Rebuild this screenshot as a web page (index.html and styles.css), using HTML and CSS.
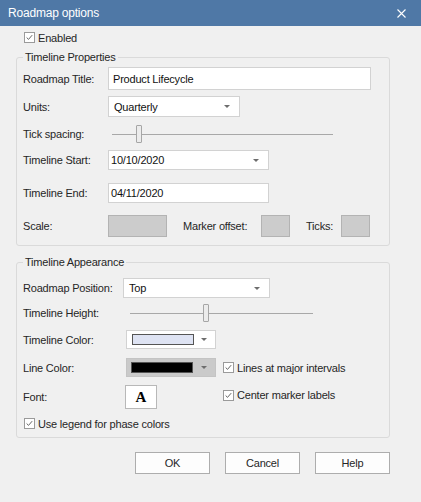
FILE: index.html
```html
<!DOCTYPE html>
<html lang="en">
<head>
    <meta charset="UTF-8">
    <meta name="viewport" content="width=device-width, initial-scale=1.0">
    <title>Roadmap options</title>
    <link rel="stylesheet" href="styles.css">
</head>
<body>
    <div class="titlebar">
        <span class="title">Roadmap options</span>
        <svg class="close" width="9" height="9" viewBox="0 0 9 9">
            <path d="M0.5 0.5 L8.5 8.5 M8.5 0.5 L0.5 8.5" stroke="#fff" stroke-width="1.1" fill="none"/>
        </svg>
    </div>

    <div class="dialog">
        <label class="check enabled">
            <span class="box"><svg viewBox="0 0 11 11"><path d="M2 5.5 L4.3 7.8 L8.8 2.6"/></svg></span>
            Enabled
        </label>

        <fieldset class="group props">
            <legend>Timeline Properties</legend>

            <span class="label">Roadmap Title:</span>
            <div class="input title-input">Product Lifecycle</div>

            <span class="label">Units:</span>
            <div class="select units">Quarterly <i class="arrow"></i></div>

            <span class="label">Tick spacing:</span>
            <div class="slider tick"><span class="thumb"></span></div>

            <span class="label">Timeline Start:</span>
            <div class="select date">10/10/2020 <i class="arrow"></i></div>

            <span class="label">Timeline End:</span>
            <div class="input date">04/11/2020</div>

            <span class="label">Scale:</span>
            <div class="scale-row">
                <span class="disabled-box scale"></span>
                <span class="inline-label marker">Marker offset:</span>
                <span class="disabled-box small"></span>
                <span class="inline-label ticks">Ticks:</span>
                <span class="disabled-box small"></span>
            </div>
        </fieldset>

        <fieldset class="group appear">
            <legend>Timeline Appearance</legend>

            <span class="label">Roadmap Position:</span>
            <div class="select position">Top <i class="arrow"></i></div>

            <span class="label">Timeline Height:</span>
            <div class="slider height"><span class="thumb"></span></div>

            <span class="label">Timeline Color:</span>
            <div class="color-combo"><span class="swatch lavender"></span><i class="arrow"></i></div>
            <span></span>

            <span class="label">Line Color:</span>
            <div class="color-combo grey"><span class="swatch black"></span><i class="arrow"></i></div>
            <label class="check">
                <span class="box"><svg viewBox="0 0 11 11"><path d="M2 5.5 L4.3 7.8 L8.8 2.6"/></svg></span>
                Lines at major intervals
            </label>

            <span class="label">Font:</span>
            <div class="font-btn">A</div>
            <label class="check center-labels">
                <span class="box"><svg viewBox="0 0 11 11"><path d="M2 5.5 L4.3 7.8 L8.8 2.6"/></svg></span>
                Center marker labels
            </label>

            <label class="check legend-check">
                <span class="box"><svg viewBox="0 0 11 11"><path d="M2 5.5 L4.3 7.8 L8.8 2.6"/></svg></span>
                Use legend for phase colors
            </label>
        </fieldset>

        <div class="buttons">
            <button>OK</button>
            <button>Cancel</button>
            <button>Help</button>
        </div>
    </div>
</body>
</html>
```

FILE: styles.css
```css
body {
    margin: 0;
    width: 421px;
    height: 502px;
    background-color: #f0f0f0;
    font-family: "Liberation Sans", Arial, sans-serif;
    font-size: 11px;
    letter-spacing: -0.2px;
    color: #262626;
    overflow: hidden;
}
.titlebar {
    height: 26px;
    background-color: #4f78a6;
    color: #fff;
    display: flex;
    align-items: center;
    justify-content: space-between;
    padding: 0 15px 0 8px;
    font-size: 12px;
}
.close {
    display: block;
}
.dialog {
    margin-left: 16px;
    width: 374px;
}
.check {
    display: flex;
    align-items: center;
    gap: 3px;
    white-space: nowrap;
}
.box {
    width: 11px;
    height: 11px;
    box-sizing: border-box;
    border: 1px solid #9a9a9a;
    background-color: #fff;
    display: inline-block;
}
.box svg {
    display: block;
    width: 9px;
    height: 9px;
    fill: none;
    stroke: #555;
    stroke-width: 1.1;
}
.enabled {
    height: 23px;
    margin-left: 8px;
}
.group {
    margin: 1px 0 0 0;
    padding: 0 6px 6px 6px;
    border: 1px solid #dadada;
    border-radius: 3px;
    min-width: 0;
    display: grid;
    align-items: center;
}
.group legend {
    padding: 0 2px;
    line-height: 14px;
}
.props {
    grid-template-columns: 85px 1fr;
    grid-template-rows: 29px 27px 28px 24px 41px 26px;
}
.appear {
    margin-top: 9px;
    padding-top: 7px;
    padding-bottom: 2px;
    grid-template-columns: 100px 100px 1fr;
    grid-template-rows: 24px 26px 27px 29px 30px 23px;
}
.input, .select {
    box-sizing: border-box;
    background-color: #fff;
    border: 1px solid #d2d2d2;
    display: flex;
    align-items: center;
    padding-left: 4px;
    color: #111;
}
.title-input {
    width: 263px;
    height: 23px;
}
.select {
    justify-content: space-between;
    padding-right: 9px;
}
.arrow {
    width: 0;
    height: 0;
    border-left: 3px solid transparent;
    border-right: 3px solid transparent;
    border-top: 3px solid #6d6d6d;
}
.units {
    width: 132px;
    height: 21px;
    padding-left: 5px;
}
.date {
    width: 161px;
    height: 20px;
    padding-left: 2px;
}
.position {
    grid-column: 2 / 4;
    width: 147px;
    height: 20px;
    padding-left: 5px;
}
.slider {
    position: relative;
    height: 1px;
    background-color: #a8a8a8;
}
.thumb {
    position: absolute;
    top: -9px;
    width: 6px;
    height: 18px;
    box-sizing: border-box;
    border: 1px solid #a6a6a6;
    border-radius: 1px;
    background-color: #ececec;
}
.tick {
    margin-left: 4px;
    width: 221px;
}
.tick .thumb {
    left: 24px;
}
.height {
    grid-column: 2 / 4;
    margin-left: 7px;
    width: 183px;
}
.height .thumb {
    left: 73px;
}
.scale-row {
    display: flex;
    align-items: center;
}
.disabled-box {
    height: 22px;
    box-sizing: border-box;
    background-color: #cccccc;
    border: 1px solid #b3b3b3;
}
.disabled-box.scale {
    width: 59px;
}
.disabled-box.small {
    width: 29px;
}
.inline-label {
    margin-left: 16px;
}
.marker {
    width: 78px;
}
.ticks {
    width: 35px;
}
.color-combo {
    margin-left: 3px;
    width: 90px;
    height: 19px;
    box-sizing: border-box;
    border: 1px solid #d2d2d2;
    background-color: #fff;
    display: flex;
    align-items: center;
    justify-content: space-between;
    padding: 0 8px 0 5px;
}
.color-combo.grey {
    background-color: #cacaca;
    border-color: #c4c4c4;
    padding-left: 4px;
}
.swatch {
    width: 62px;
    height: 11px;
    box-sizing: border-box;
    border: 1px solid #555;
}
.swatch.lavender {
    background-color: #dee3f3;
}
.swatch.black {
    background-color: #000;
}
.font-btn {
    margin-left: 2px;
    width: 32px;
    height: 24px;
    box-sizing: border-box;
    border: 1px solid #b8b8b8;
    background-color: #fff;
    display: flex;
    align-items: center;
    justify-content: center;
    font-family: "Liberation Serif", "Times New Roman", serif;
    font-weight: bold;
    font-size: 15px;
    letter-spacing: 0;
    color: #000;
}
.center-labels {
    align-self: start;
    margin-top: 7px;
}
.legend-check {
    grid-column: 1 / 4;
    margin-left: 1px;
}
.buttons {
    margin-top: 14px;
    display: flex;
    justify-content: flex-end;
    gap: 15px;
}
.buttons button {
    width: 75px;
    height: 22px;
    border: 1px solid #adadad;
    background-color: #fdfdfd;
    font-family: inherit;
    font-size: 11px;
    letter-spacing: -0.2px;
    color: #262626;
    padding: 0;
}
```
